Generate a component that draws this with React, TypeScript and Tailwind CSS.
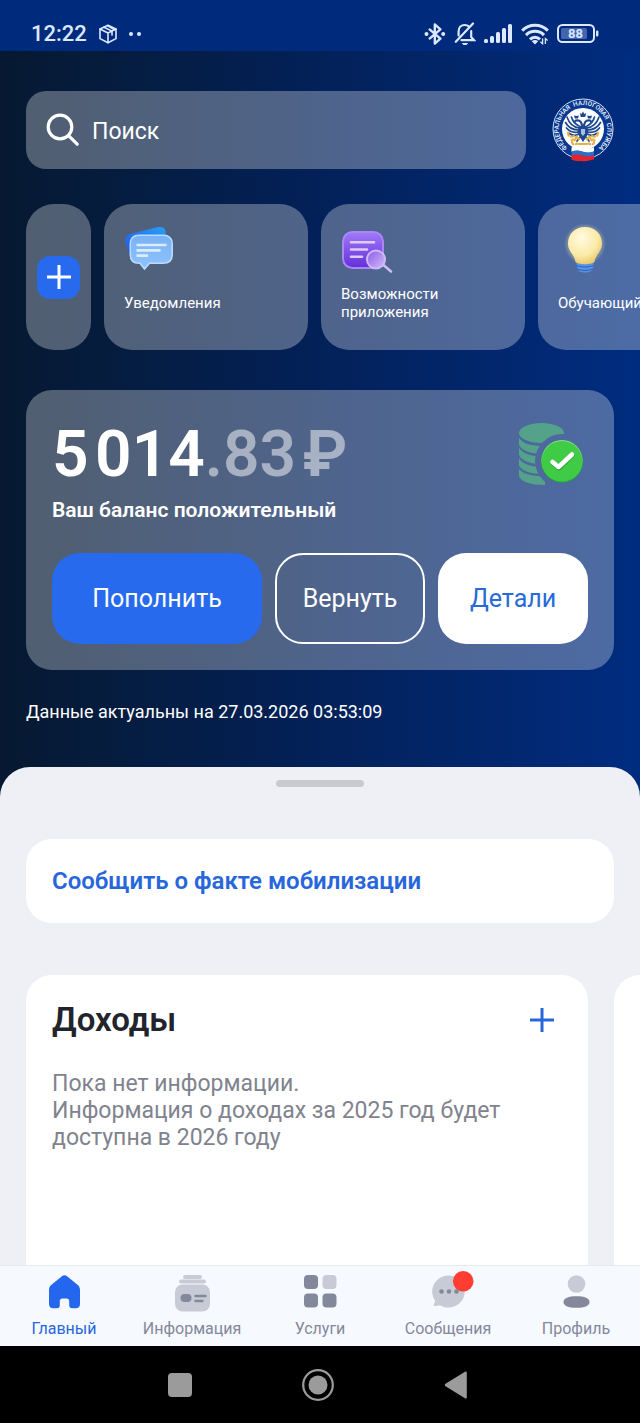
import type { ReactNode } from "react"

type Shortcut = {
  title: string
  icon: ReactNode
}

type Tab = {
  label: string
  icon: ReactNode
  active?: boolean
}

function PackageIcon() {
  return (
    <svg width="20" height="20" viewBox="0 0 20 20" fill="none" stroke="currentColor" strokeWidth="1.6" strokeLinejoin="round" strokeLinecap="round">
      <path d="M10 1.2 18 5v9.6l-8 4.2-8-4.2V5z" />
      <path d="m2 5 8 4 8-4M10 9v9.6" />
      <path d="m6 3.2 8 3.9v4M9.5 1.6l6.5 4" />
    </svg>
  )
}

function BluetoothIcon() {
  return (
    <svg width="22" height="24" viewBox="0 0 22 24" fill="none" stroke="currentColor" strokeWidth="2.4" strokeLinejoin="round">
      <path d="m5 6.8 11.4 9.8-5.6 5V2.4l5.6 5L5 17.2" />
      <circle cx="2.5" cy="12" r="2" fill="currentColor" stroke="none" />
      <circle cx="19.2" cy="12" r="2" fill="currentColor" stroke="none" />
    </svg>
  )
}

function BellOffIcon() {
  return (
    <svg width="22" height="24" viewBox="0 0 22 24" fill="none" stroke="currentColor" strokeWidth="2.2" strokeLinecap="round">
      <path d="M4.6 13.5v-4C4.6 5.8 7 3 10.8 3c1.6 0 3 .5 4 1.3M17.2 9v6l2.8 3.2H7.5" />
      <path d="M19 1.5 1.8 19.8" />
      <path d="M7.8 21h6.4l-1.7 2h-3z" fill="currentColor" stroke="none" />
    </svg>
  )
}

function SignalIcon() {
  return (
    <svg width="29" height="20" viewBox="0 0 29 20" fill="currentColor">
      <rect x="0" y="15" width="4" height="4" rx="1.5" />
      <rect x="6" y="12" width="4" height="7" rx="1.5" />
      <rect x="12" y="8" width="4" height="11" rx="1.5" />
      <rect x="18" y="4" width="4" height="15" rx="1.5" />
      <rect x="24" y="0" width="4" height="19" rx="1.5" />
    </svg>
  )
}

function WifiIcon() {
  return (
    <svg width="28" height="22" viewBox="0 0 28 22" fill="none" stroke="currentColor" strokeWidth="3">
      <path d="M1.2 7.6c7-7 18.6-7 25.6 0" />
      <path d="M5 12.1c5-5 13-5 18 0" />
      <path d="M9 16.4c2.8-2.8 7.2-2.8 10 0" />
      <path d="m10.8 18.2 3.2 3.4 3.2-3.4c-1.8-1.6-4.6-1.6-6.4 0z" fill="currentColor" stroke="none" />
      <path d="m21.6 15.5v5.2l-2.2-2M24.4 21v-5.4l2.2 2" strokeWidth="1.3" />
    </svg>
  )
}

function BatteryIcon() {
  return (
    <svg width="42" height="20" viewBox="0 0 42 20" fill="none">
      <rect x="1" y="1" width="36" height="17" rx="4.5" stroke="currentColor" strokeWidth="2" />
      <rect x="4" y="4" width="26" height="11" rx="1.5" fill="#4464ae" />
      <rect x="39" y="6.5" width="2.4" height="6" rx="1" fill="currentColor" />
      <text x="18.5" y="14.2" textAnchor="middle" fontSize="13" fontWeight="700" fill="currentColor">
        88
      </text>
    </svg>
  )
}

function SearchIcon() {
  return (
    <svg width="34" height="34" viewBox="0 0 34 34" fill="none" stroke="currentColor" strokeWidth="3.2" strokeLinecap="round">
      <circle cx="14" cy="14" r="11.8" />
      <path d="m22.8 22.8 8.4 8.4" />
    </svg>
  )
}

function Emblem() {
  return (
    <svg width="62" height="64" viewBox="0 0 62 64" fill="none">
      <defs>
        <path id="ring" d="M14 48.5A24.2 24.2 0 1 1 48 48.5" />
      </defs>
      <circle cx="31" cy="31" r="30" fill="#08388f" stroke="#d5e2fa" strokeWidth="1" />
      <circle cx="31" cy="31" r="21" fill="#fff" />
      <text fontSize="6.4" fontWeight="500" fill="#eef4ff">
        <textPath href="#ring" startOffset="50%" textAnchor="middle">
          ФЕДЕРАЛЬНАЯ&#160; НАЛОГОВАЯ&#160; СЛУЖБА
        </textPath>
      </text>
      <g stroke="#1d488f" strokeWidth="1.7" strokeLinecap="round">
        <path d="M27 30C21 29 17 25 15 19M26.5 32C20 32 16 29 13.5 24.5M26.5 34C21 35 17 33 14.5 30M27 28c-4-2-6.5-5-7.5-9M26.5 36c-3 2-6 2-9-.5" />
        <path d="M35 30c6-1 10-5 12-11M35.5 32c6.5 0 10.5-3 13-7.5M35.5 34c5.5 1 9.5-1 12-4M35 28c4-2 6.5-5 7.5-9M35.5 36c3 2 6 2 9-.5" />
        <path d="M30 29c0-4-1.5-7.5-6-6.5L22.5 24M32 29c0-4 1.500-7.5 6-6.5l1.5 1.5" strokeWidth="2.2" />
        <path d="M27.5 40 25 43M34.5 40l2.5 3" />
      </g>
      <g fill="#1d488f">
        <path d="M27 28h8l1.5 4-1.5 6-4 6-4-6-1.5-4.5z" />
        <path d="M28.8 19h4.4l1-4-1.8 1-1.4-2.5-1.4 2.5-1.8-1zM22.8 20.5H26l.8-3-2.3.6-2.5-.6zM36 20.5h3.2l.8-3-2.5.6-2.3-.6z" />
      </g>
      <path d="M29 31h4v4.5L31 38l-2-2.5z" fill="#a9bfe2" />
      <g stroke="#e3b34a" strokeWidth="2.2" strokeLinecap="round">
        <path d="M16 34.5c0 3 2 5 4.5 4s4 .5 3 2.5-3.5 1.5-3.5 3.5 3 2.5 5 1" strokeDasharray="3 2.6" />
        <path d="M46 34.5c0 3-2 5-4.5 4s-4 .5-3 2.5 3.5 1.5 3.5 3.5-3 2.5-5 1" strokeDasharray="3 2.6" />
        <path d="M24.5 38.5 27 41M37.5 38.5 35 41M26.5 46h9M21 41.5l-1.5.5M41 41.5l1.5.5" />
      </g>
      <path d="M19.5 49.5c4-2 7.5-1 11.5.3s8 .8 11-.8v4.7c-4 1.6-7.5 1.3-11.3.1s-7.7-1.6-11.2.2z" fill="#fff" />
      <path d="M19.5 53.5c4-1.8 7.5-1 11.5.2s8 .8 11-.8V58c-4 1.6-7.5 1.3-11.3.1s-7.7-1.6-11.2.2z" fill="#2d6fc4" />
      <path d="M19.5 57.5c4-1.8 7.5-1 11.5.2s8 .8 11-.8v4.3c-2.5.9-4 .4-5.5 1.5-4 1.2-6.5-.2-8.5.3-3 .5-5.5-.5-8.5-1.2z" fill="#e5232d" />
    </svg>
  )
}

function PlusIcon({ size, width }: { size: number; width: number }) {
  return (
    <svg width={size} height={size} viewBox="0 0 24 24" fill="none" stroke="currentColor" strokeWidth={width}>
      <path d="M12 0v24M0 12h24" />
    </svg>
  )
}

function ChatCardsIcon() {
  return (
    <svg width="52" height="48" viewBox="0 0 52 48" fill="none">
      <defs>
        <linearGradient id="chatBack" x1="0" y1="1" x2="1" y2="0">
          <stop offset="0" stopColor="#1d55ee" />
          <stop offset="1" stopColor="#2aa2f2" />
        </linearGradient>
        <linearGradient id="chatFront" x1="0" y1="0" x2="0" y2="1">
          <stop offset="0" stopColor="#78b2f6" />
          <stop offset="1" stopColor="#8fc3fa" />
        </linearGradient>
      </defs>
      <path d="M8 7.5 32 1.5c6-1.3 9 0 9.5 4L45 22 6 30 1.5 16C.5 11 3 8.7 8 7.5z" fill="url(#chatBack)" />
      <path
        d="M15 9.2h24c6 0 9.2 3.2 9.2 8.8v10.5c0 5.5-3.2 8.7-9.2 8.7H25.5L20.5 43 16 37.2h-1c-5.5 0-8.7-3.2-8.7-8.7V18c0-5.6 3.2-8.8 8.7-8.8z"
        fill="url(#chatFront)"
        stroke="#b9dbff"
        strokeWidth="1.6"
      />
      <path d="M12.5 19h30M12.5 24.4h24M12.5 29.7h11.5" stroke="#dcecff" strokeWidth="2.7" />
    </svg>
  )
}

function FeaturesIcon() {
  return (
    <svg width="52" height="48" viewBox="0 0 52 48" fill="none">
      <defs>
        <linearGradient id="features" x1="0" y1="0" x2="0" y2="1">
          <stop offset="0" stopColor="#a179f8" />
          <stop offset="1" stopColor="#652edb" />
        </linearGradient>
        <linearGradient id="lens" x1="0" y1="0" x2="1" y2="1">
          <stop offset="0" stopColor="#8a5be8" />
          <stop offset="1" stopColor="#d3bdf8" />
        </linearGradient>
      </defs>
      <rect x="2" y="6" width="40" height="36" rx="9.5" fill="url(#features)" stroke="#a987f4" strokeWidth="2" />
      <path d="M10 16.2h23M10 23.5h16M10 30.7h11" stroke="#dccdfc" strokeWidth="2.6" strokeLinecap="round" />
      <path d="m42.5 39 7.5 6.5" stroke="#cdbcf2" strokeWidth="2.6" strokeLinecap="round" />
      <circle cx="35" cy="33.5" r="9" fill="url(#lens)" stroke="#cfb9f8" strokeWidth="2" />
    </svg>
  )
}

function BulbIcon() {
  return (
    <svg width="52" height="48" viewBox="0 0 52 48" fill="none" className="overflow-visible">
      <defs>
        <radialGradient id="bulb" cx=".4" cy=".3" r=".8">
          <stop offset="0" stopColor="#fffbe0" />
          <stop offset=".6" stopColor="#fbe9a6" />
          <stop offset="1" stopColor="#e3bd58" />
        </radialGradient>
        <radialGradient id="bulbGlow">
          <stop offset=".7" stopColor="#f5e6a0" stopOpacity=".45" />
          <stop offset="1" stopColor="#f5e6a0" stopOpacity="0" />
        </radialGradient>
      </defs>
      <circle cx="27" cy="18" r="21" fill="url(#bulbGlow)" />
      <path d="M18 34.5h18l-1.5 9c-1 4-14 4-15 0z" fill="#5b93e4" />
      <path d="M18.5 39.5c5 2 12 2 16.5 0M19 43c5 2 11 2 15.5 0" stroke="#2c5fb4" strokeWidth="1" />
      <path d="M27 1C17 1 10 8 10 17.5c0 8 6.5 11 7.5 18.5 4 3 15 3 19 0 1-7.5 7.5-10.5 7.5-18.5C44 8 37 1 27 1z" fill="url(#bulb)" />
    </svg>
  )
}

function CoinsIcon() {
  return (
    <svg width="66" height="64" viewBox="0 0 66 64" fill="none">
      <defs>
        <mask id="coinsCut">
          <rect width="66" height="64" fill="#fff" />
          <circle cx="44" cy="39" r="27" fill="#000" />
        </mask>
      </defs>
      <g mask="url(#coinsCut)" fill="#55a28a">
        <ellipse cx="23.5" cy="11" rx="22.5" ry="10" />
        <path d="M1 16c4 6 12 8 26 8v8C13 32 4 29 1 23z" />
        <path d="M1 26c4 6 12 8.5 26 8.5v8C13 42.5 4 39 1 33z" />
        <path d="M1 36.5c4 6 12 8.5 26 8.5v7c-14 0-23-2.5-26-8.5z" />
        <path d="M1 47c4 5 12 7 26 7.5V63C13 63 3 60 1 54z" />
      </g>
      <circle cx="44" cy="39.5" r="21" fill="#25a83a" />
      <circle cx="44" cy="38.5" r="20.5" fill="#8be08b" />
      <circle cx="44" cy="39.3" r="20.3" fill="#3fcb46" />
      <path d="m35 41.5 6 5 13.5-13" stroke="#1b8b30" strokeOpacity=".5" strokeWidth="4.5" strokeLinecap="round" strokeLinejoin="round" />
      <path d="m34.5 40 6 5L54 32.5" stroke="#fff" strokeWidth="4.5" strokeLinecap="round" strokeLinejoin="round" />
    </svg>
  )
}

function HomeIcon() {
  return (
    <svg width="36" height="38" viewBox="0 0 36 38" fill="#2467ee">
      <path d="M15.900 2.200c1.700-1.400 3.500-1.400 5.200 0l10.400 8.500c1.700 1.400 2.500 3 2.500 5.200V30c0 2.800-1.500 4.300-4.300 4.300h-3.500c-2 0-3-1-3-3v-4c0-1.800-.9-2.700-2.700-2.700h-4c-1.800 0-2.700.9-2.700 2.700v4c0 2-1 3-3 3H7.300C4.500 34.300 3 32.800 3 30V15.900c0-2.200.8-3.800 2.500-5.200z" />
    </svg>
  )
}

function InfoIcon() {
  return (
    <svg width="36" height="38" viewBox="0 0 36 38" fill="#c8cbd6">
      <rect x="9" y="1" width="19" height="4" rx="2" />
      <rect x="5" y="5.5" width="27" height="4" rx="2" />
      <rect x="1" y="10.5" width="35" height="27" rx="7.5" />
      <rect x="6.5" y="20" width="11" height="8" rx="4" fill="#83889b" />
      <path d="M21.5 22h10M21.5 27h7" stroke="#83889b" strokeWidth="2.4" strokeLinecap="round" />
    </svg>
  )
}

function ServicesIcon() {
  return (
    <svg width="36" height="38" viewBox="0 0 36 38" fill="#83889b">
      <rect x="2" y="1" width="14" height="14" rx="4" />
      <rect x="20.5" y="1" width="14" height="14" rx="4" fill="#c8cbd6" />
      <rect x="2" y="19.5" width="14" height="14" rx="4" />
      <rect x="20.5" y="19.5" width="14" height="14" rx="4" />
    </svg>
  )
}

function MessagesIcon() {
  return (
    <svg width="36" height="38" viewBox="0 0 36 38" fill="#c8cbd6" className="overflow-visible">
      <path d="M18.5 1.5c9 0 16.3 7.2 16.3 16s-7.3 16-16.3 16c-3.2 0-6-.8-8.5-2.3L5.2 32c-1.2.2-1.700-.7-1.300-1.600l1.300-3.600c-1.900-2.700-3-5.800-3-9.300 0-8.800 7.300-16 16.300-16z" />
      <g fill="#83889b">
        <circle cx="11.5" cy="17.5" r="2.3" />
        <circle cx="19" cy="17.5" r="2.3" />
        <circle cx="26.5" cy="17.5" r="2.3" />
      </g>
      <circle cx="33.2" cy="7.2" r="10.3" fill="#ff3d33" />
    </svg>
  )
}

function ProfileIcon() {
  return (
    <svg width="36" height="38" viewBox="0 0 36 38">
      <circle cx="18.5" cy="10" r="8.8" fill="#c8cbd6" />
      <path d="M5.5 28c0-4 5-5.8 13-5.8s13 1.8 13 5.8-5 5.8-13 5.8S5.5 32 5.5 28z" fill="#83889b" />
    </svg>
  )
}

const shortcuts: Shortcut[] = [
  { title: "Уведомления", icon: <ChatCardsIcon /> },
  { title: "Возможности приложения", icon: <FeaturesIcon /> },
  { title: "Обучающий", icon: <BulbIcon /> },
]

const tabs: Tab[] = [
  { label: "Главный", icon: <HomeIcon />, active: true },
  { label: "Информация", icon: <InfoIcon /> },
  { label: "Услуги", icon: <ServicesIcon /> },
  { label: "Сообщения", icon: <MessagesIcon /> },
  { label: "Профиль", icon: <ProfileIcon /> },
]

function StatusBar() {
  return (
    <div className="flex h-[51px] items-end justify-between bg-[#002b7c] pr-[41px] pb-[5px] pl-[31px] text-[#dce8ff]">
      <div className="flex items-center">
        <span className="text-[22px] leading-6 font-medium">12:22</span>
        <span className="ml-[11px]">
          <PackageIcon />
        </span>
        <span className="ml-[11px] flex gap-1">
          <i className="size-1 rounded-full bg-current" />
          <i className="size-1 rounded-full bg-current" />
        </span>
      </div>
      <div className="flex items-center gap-2">
        <BluetoothIcon />
        <BellOffIcon />
        <SignalIcon />
        <WifiIcon />
        <BatteryIcon />
      </div>
    </div>
  )
}

function BalanceCard() {
  return (
    <section className="mx-[26px] mt-10 rounded-[26px] bg-white/30 p-[26px]">
      <div className="flex items-start justify-between">
        <div>
          <p className="mt-1 text-[64px] leading-[70px] font-semibold whitespace-nowrap">
            5&#8202;014<span className="text-white/50">.83&#8202;₽</span>
          </p>
          <p className="mt-2 text-[21px] leading-6 font-semibold">Ваш баланс положительный</p>
        </div>
        <div className="mt-[6px] mr-[4px]">
          <CoinsIcon />
        </div>
      </div>
      <div className="mt-[31px] grid grid-cols-[7fr_5fr_5fr] gap-[13px] text-[25px]">
        <button type="button" className="h-[91px] rounded-[28px] bg-[#276aee]">
          Пополнить
        </button>
        <button type="button" className="h-[91px] rounded-[28px] border-2 border-white">
          Вернуть
        </button>
        <button type="button" className="h-[91px] rounded-[28px] bg-white text-[#276ad8]">
          Детали
        </button>
      </div>
    </section>
  )
}

export default function App() {
  return (
    <div className="flex min-h-screen flex-col overflow-hidden bg-[#eef0f6] font-[Roboto,sans-serif]">
      <StatusBar />

      <header className="bg-linear-to-r from-[#061931] via-[#032159] to-[#002c80] pt-10 pb-20 text-white">
        <div className="flex items-center gap-[26px] px-[26px]">
          <label className="flex h-[78px] flex-1 items-center gap-3 rounded-[20px] bg-white/30 px-5">
            <SearchIcon />
            <input
              type="search"
              aria-label="Поиск"
              placeholder="Поиск"
              className="min-w-0 flex-1 bg-transparent pt-1 text-[23px] outline-none placeholder:text-white"
            />
          </label>
          <a href="#profile" aria-label="Федеральная налоговая служба">
            <Emblem />
          </a>
        </div>

        <div className="mt-[35px] flex gap-[13px] overflow-hidden pl-[26px]">
          <button
            type="button"
            aria-label="Добавить"
            className="flex h-[146px] w-[65px] shrink-0 items-center justify-center rounded-[28px] bg-white/30"
          >
            <span className="flex size-[43px] items-center justify-center rounded-[13px] bg-[#276aee]">
              <PlusIcon size={24} width={3} />
            </span>
          </button>
          {shortcuts.map((s) => (
            <button
              key={s.title}
              type="button"
              className="flex h-[146px] w-[204px] shrink-0 flex-col items-start rounded-[28px] bg-white/30 px-5 pt-[22px] text-left text-[15px] leading-[18px]"
            >
              {s.icon}
              <span className="flex h-[58px] w-32 items-center">{s.title}</span>
            </button>
          ))}
        </div>

        <BalanceCard />

        <p className="mx-[26px] mt-[30px] text-[18px] leading-6">Данные актуальны на 27.03.2026 03:53:09</p>
      </header>

      <main className="-mt-[37px] flex flex-1 flex-col rounded-t-[30px] bg-[#eef0f6]">
        <div className="mx-auto mt-[13px] h-[7px] w-[88px] rounded-full bg-[#c8cacf]" />
        <a
          href="#mobilization"
          className="mx-[26px] mt-[52px] flex h-[84px] items-center rounded-[26px] bg-white px-[26px] text-[24px] font-semibold text-[#2866dc]"
        >
          Сообщить о факте мобилизации
        </a>

        <div className="mt-[52px] flex flex-1 gap-[26px] pl-[26px]">
          <section className="flex-1 rounded-t-[26px] bg-white px-[26px] pt-[25px]">
            <div className="flex items-center justify-between pr-2">
              <h2 className="text-[33px] leading-10 font-semibold text-[#22242c]">Доходы</h2>
              <button type="button" aria-label="Добавить доход" className="text-[#2866dc]">
                <PlusIcon size={24} width={3} />
              </button>
            </div>
            <p className="mt-[30px] text-[23px] leading-[27px] text-[#80838e]">
              Пока нет информации.
              <br />
              Информация о доходах за 2025 год будет доступна в 2026 году
            </p>
          </section>
          <div className="w-[26px] rounded-tl-[26px] bg-white" />
        </div>
      </main>

      <nav className="grid h-[81px] grid-cols-5 border-t border-[#e6e9ee] bg-[#f6f9fe]">
        {tabs.map((tab) => (
          <a
            key={tab.label}
            href="#"
            aria-current={tab.active ? "page" : undefined}
            className={`flex flex-col items-center pt-2 text-[16px] leading-6 ${tab.active ? "text-[#2866dc]" : "text-[#83889b]"}`}
          >
            {tab.icon}
            <span className="mt-[5px]">{tab.label}</span>
          </a>
        ))}
      </nav>

      <div className="flex h-[77px] items-center justify-center gap-[110px] bg-black pr-1 text-[#9b9b9b]">
        <button type="button" aria-label="Недавние">
          <svg width="24" height="24" viewBox="0 0 24 24" fill="currentColor">
            <rect width="24" height="24" rx="4" />
          </svg>
        </button>
        <button type="button" aria-label="Домой">
          <svg width="32" height="32" viewBox="0 0 32 32" fill="currentColor">
            <circle cx="16" cy="16" r="14.8" fill="none" stroke="currentColor" strokeWidth="2.2" />
            <circle cx="16" cy="16" r="9.5" />
          </svg>
        </button>
        <button type="button" aria-label="Назад">
          <svg width="24" height="28" viewBox="0 0 24 28" fill="currentColor">
            <path d="M21 .8c1-.6 1.8 0 1.8 1v24.4c0 1-.8 1.6-1.8 1L1.5 15.2c-1-.6-1-1.8 0-2.4z" />
          </svg>
        </button>
      </div>
    </div>
  )
}
